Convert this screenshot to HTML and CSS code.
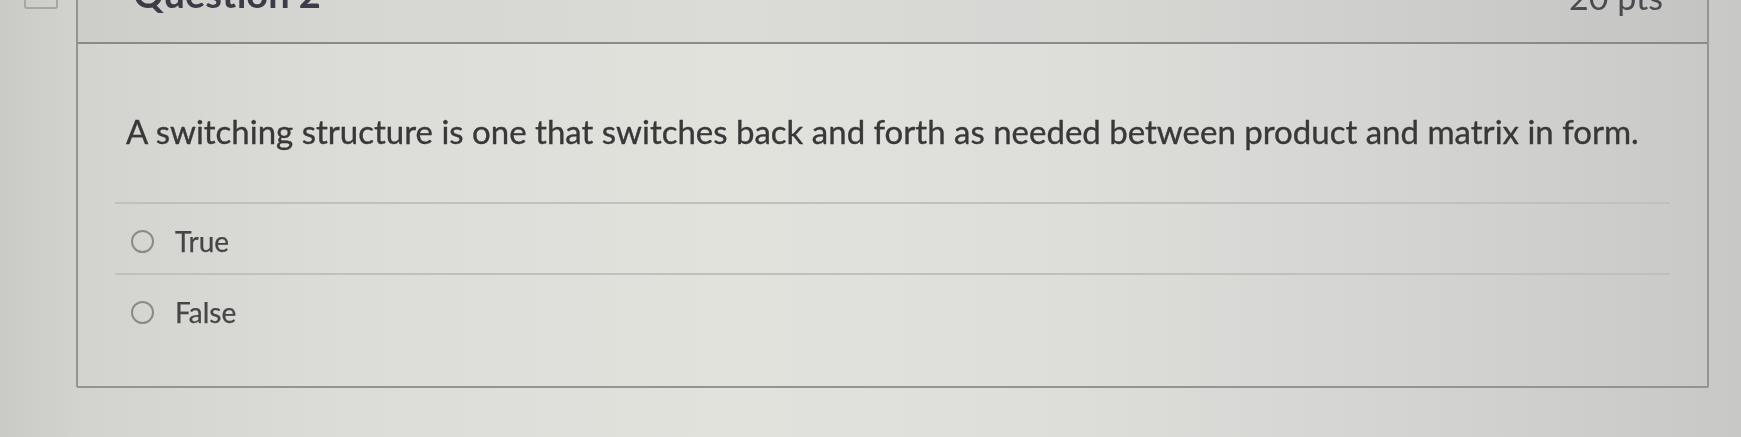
FILE: index.html
```html
<!DOCTYPE html>
<html lang="en">
<head>
<meta charset="utf-8">
<title>Quiz – Question 2</title>
<link rel="stylesheet" href="styles.css">
</head>
<body>
<div class="page">
  <aside class="gutter">
    <span class="flag-icon" aria-hidden="true"></span>
  </aside>
  <section class="question">
    <header class="question-header">
      <h2 class="question-title">Question 2</h2>
      <span class="question-points">20 pts</span>
    </header>
    <div class="question-body">
      <p class="question-text">A switching structure is one that switches back and forth as needed between product and matrix in form.</p>
      <ul class="answers">
        <li class="answer">
          <span class="radio"></span>
          <span class="answer-label">True</span>
        </li>
        <li class="answer">
          <span class="radio"></span>
          <span class="answer-label">False</span>
        </li>
      </ul>
    </div>
  </section>
</div>
</body>
</html>
```

FILE: styles.css
```css
html, body {
  margin: 0;
  padding: 0;
}

body {
  width: 1741px;
  height: 437px;
  overflow: hidden;
  font-family: Lato, "Liberation Sans", sans-serif;
  background: linear-gradient(to right,
    #cacac7 0%,
    #d3d3d0 5%,
    #dcdcd8 20%,
    #e2e2dd 42%,
    #dddddA 62%,
    #d3d3d1 82%,
    #c8c8c6 100%);
}

.page {
  display: flex;
  align-items: flex-start;
  filter: blur(0.5px);
}

.gutter {
  width: 76px;
  flex: none;
}

.flag-icon {
  display: block;
  width: 30px;
  height: 14px;
  margin: -9px 0 0 24px;
  border: 2px solid #a6a6a4;
  border-radius: 3px;
}

.question {
  width: 1629px;
  margin-top: -20px;
  border: 2px solid #949492;
  border-radius: 2px;
}

.question-header {
  height: 60px;
  display: flex;
  justify-content: space-between;
  align-items: flex-end;
  padding: 0 44px 0 55px;
  border-bottom: 2px solid #8a8a88;
  background: rgba(120, 120, 115, 0.06);
}

.question-title {
  margin: 0 0 30px;
  font-size: 38px;
  font-weight: 700;
  line-height: 38px;
  color: #3c3c48;
}

.question-points {
  margin-bottom: 28px;
  font-size: 34px;
  line-height: 34px;
  color: #4a4a50;
}

.question-body {
  padding: 0 37px 42px 37px;
}

.question-text {
  margin: 0;
  padding: 68px 0 52px 11px;
  font-size: 33px;
  line-height: 38px;
  color: #383838;
  -webkit-text-stroke: 0.35px #383838;
  white-space: nowrap;
}

.answers {
  list-style: none;
  margin: 0;
  padding: 0;
}

.answer {
  display: flex;
  align-items: center;
  gap: 21px;
  padding: 5px 0 0 16px;
  box-sizing: border-box;
  height: 71px;
  border-top: 2px solid #c0c0bd;
}

.radio {
  width: 19px;
  height: 19px;
  flex: none;
  border: 2px solid #8a8a88;
  border-radius: 50%;
}

.answer-label {
  font-size: 28px;
  color: #464646;
  -webkit-text-stroke: 0.25px #464646;
}
```
